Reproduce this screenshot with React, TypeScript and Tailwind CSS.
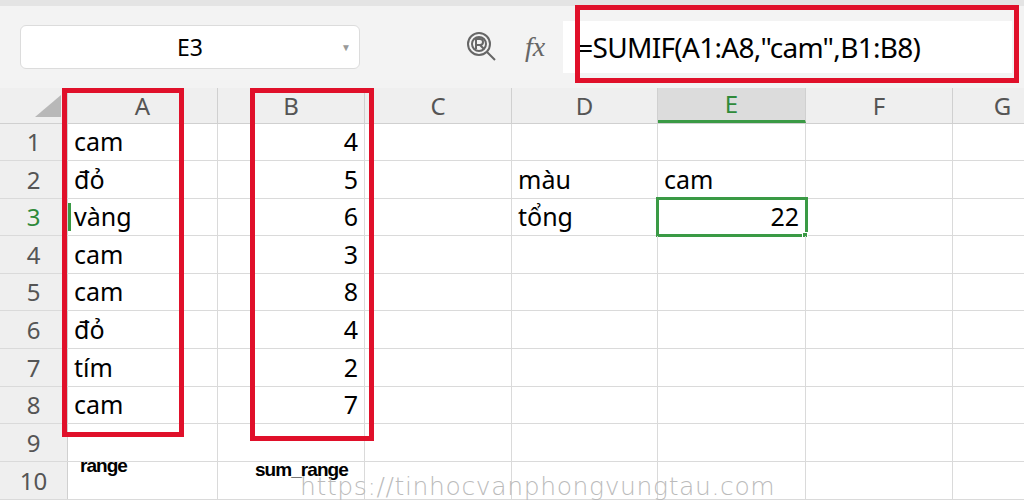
export default function App() {
  const cols = [
    { l: "A", w: 150 }, { l: "B", w: 147 }, { l: "C", w: 147 }, { l: "D", w: 146 },
    { l: "E", w: 148 }, { l: "F", w: 147 }, { l: "G", w: 100 },
  ];
  const data: Record<number, (string | null)[]> = {
    1: ["cam", "4"], 2: ["đỏ", "5", null, "màu", "cam"], 3: ["vàng", "6", null, "tổng", "22"],
    4: ["cam", "3"], 5: ["cam", "8"], 6: ["đỏ", "4"], 7: ["tím", "2"], 8: ["cam", "7"],
  };
  const heights = [37, 38, 37, 38, 37, 38, 38, 37, 38, 38];
  const font = { fontFamily: '"Noto Sans", "Open Sans", sans-serif' };
  return (
    <div className="relative w-[1024px] h-[500px] overflow-hidden bg-white text-black" style={font}>
      <div className="h-[88px] bg-[#f3f3f3] border-t-[6px] border-[#e4e4e4] flex items-center">
        <div className="ml-[20px] w-[340px] h-[44px] shrink-0 bg-white rounded-md border border-[#dcdcdc] flex items-center relative">
          <span className="flex-1 text-center text-[23px]">E3</span>
          <span className="absolute right-[8px] text-[10px] text-[#999]">▼</span>
        </div>
        <svg className="ml-[105px] shrink-0" width="34" height="34" viewBox="0 0 34 34" fill="none" stroke="#666" strokeWidth="2">
          <circle cx="14" cy="14" r="11" />
          <circle cx="14" cy="14" r="7" />
          <path d="M11 19V9h4a3 3 0 010 6h-4M15 15l4 4M22 22l8 8" />
        </svg>
        <span className="ml-[26px] text-[28px] italic text-[#666]" style={{ fontFamily: '"Liberation Serif", serif' }}>fx</span>
        <div className="ml-[18px] flex-1 mr-[12px] h-[52px] bg-white flex items-center pl-[14px] text-[28px] whitespace-nowrap tracking-tight">=SUMIF(A1:A8,"cam",B1:B8)</div>
      </div>
      <div className="flex h-[36px] bg-[#efefef] border-b border-[#d0d0d0]">
        <div className="w-[68px] shrink-0 border-r border-[#d0d0d0] relative">
          <div className="absolute right-[6px] bottom-[6px] w-0 h-0 border-l-[26px] border-l-transparent border-b-[22px] border-b-[#b8b8b8]" />
        </div>
        {cols.map((c) => (
          <div key={c.l} style={{ width: c.w }} className={`shrink-0 border-r border-[#d0d0d0] flex items-center justify-center text-[24px] ${c.l === "E" ? "bg-[#dcdcdc] text-[#2f8a3a] border-b-[3px] border-b-[#3a9a45]" : "text-[#555]"}`}>{c.l}</div>
        ))}
      </div>
      {heights.map((h, i) => {
        const r = i + 1;
        const row = data[r] || [];
        return (
          <div key={r} className="flex border-b border-[#dadada]" style={{ height: h }}>
            <div className={`w-[68px] shrink-0 bg-[#efefef] border-r border-[#d0d0d0] flex items-center justify-center text-[24px] ${r === 3 ? "text-[#2f8a3a]" : "text-[#555]"}`}>{r}</div>
            {cols.map((c, j) => {
              const v = row[j];
              const num = v != null && /^\d+$/.test(v);
              const sel = r === 3 && c.l === "E";
              return (
                <div key={c.l} style={{ width: c.w }} className={`shrink-0 border-r border-[#dadada] flex items-center px-[6px] text-[25px] relative ${num ? "justify-end" : ""} ${sel ? "outline outline-[3px] outline-[#3a9a45] -outline-offset-1" : ""}`}>
                  {r === 3 && j === 0 && <div className="absolute left-0 top-[4px] bottom-[4px] w-[3px] bg-[#3a9a45]" />}
                  {v}
                  {sel && <div className="absolute -right-[3px] -bottom-[3px] w-[6px] h-[6px] bg-[#3a9a45] border border-white" />}
                </div>
              );
            })}
          </div>
        );
      })}
      <div className="absolute left-[80px] top-[452px] text-[19px] font-bold tracking-tighter" style={{ fontFamily: '"Liberation Sans", sans-serif' }}>range</div>
      <div className="absolute left-[255px] top-[456px] text-[19px] font-bold tracking-tighter" style={{ fontFamily: '"Liberation Sans", sans-serif' }}>sum_range</div>
      <div className="absolute left-[300px] top-[468px] text-[25px] text-[#bbb] tracking-wide" style={{ fontFamily: '"DejaVu Sans", sans-serif', fontWeight: 200 }}>https://tinhocvanphongvungtau.com</div>
      <div className="absolute left-[62px] top-[88px] w-[122px] h-[349px] border-[5px] border-[#e0102a]" />
      <div className="absolute left-[250px] top-[88px] w-[124px] h-[353px] border-[5px] border-[#e0102a]" />
      <div className="absolute left-[575px] top-[5px] w-[444px] h-[78px] border-[5px] border-[#e0102a]" />
    </div>
  );
}
